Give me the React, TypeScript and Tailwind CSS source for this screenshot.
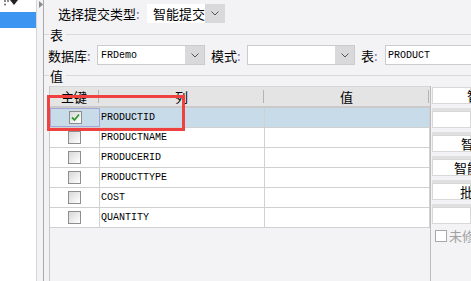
import React from "react";

const rows = ["PRODUCTID", "PRODUCTNAME", "PRODUCERID", "PRODUCTTYPE", "COST", "QUANTITY"];

const sideButtons = [
  { label: "智能添加字段", pad: "pl-[34px]" },
  { label: "", pad: "pl-[28px]" },
  { label: "智能添加单元格", pad: "pl-[28px]" },
  { label: "智能添加组合", pad: "pl-[21px]" },
  { label: "批量修改", pad: "pl-[27px]" },
  { label: "", pad: "pl-[27px]" },
];

function Chevron() {
  return (
    <svg width="8" height="5" viewBox="0 0 8 5">
      <path d="M0.5 0.5 L4 4 L7.5 0.5" fill="none" stroke="#555" strokeWidth="1" />
    </svg>
  );
}

function Colon() {
  return <span className="text-[#7d6f9a]">:</span>;
}

function Combo({ text, w }: { text?: string; w: string }) {
  return (
    <div className={`${w} shrink-0 h-[20px] flex border border-[#cbcbcb] bg-white`}>
      <div className="flex-1 flex items-center pl-[3px] font-['Liberation_Mono',monospace] text-[10px] text-black">
        {text}
      </div>
      <div className="w-[19px] bg-[#d9d9dc] flex items-center justify-center">
        <Chevron />
      </div>
    </div>
  );
}

function Separator({ label }: { label: string }) {
  return (
    <div className="h-[21px] flex items-center shrink-0">
      <div className="w-[5px] h-px bg-[#d9d9d9]" />
      <span className="px-[1px] text-[13px] leading-none text-black">{label}</span>
      <div className="flex-1 h-px bg-[#d9d9d9] ml-[2px]" />
    </div>
  );
}

function CheckBox({ checked }: { checked?: boolean }) {
  return (
    <div className="w-[13px] h-[13px] shrink-0 border border-[#8e8e8e] bg-linear-to-br from-[#d8d8d8] to-white flex items-center justify-center">
      {checked && (
        <svg width="11" height="11" viewBox="0 0 11 11">
          <path d="M2 5.5 L4.5 8 L9 2.5" fill="none" stroke="#2f9a2f" strokeWidth="1.8" />
        </svg>
      )}
    </div>
  );
}

export default function App() {
  return (
    <div className="relative w-[471px] h-[281px] overflow-hidden flex bg-[#f3f3f5] font-['Noto_Sans_CJK_SC',sans-serif] text-black">
      {/* tree panel */}
      <div className="w-[37px] shrink-0 bg-white border-r border-[#d5d5d5] flex flex-col">
        <svg width="17" height="7" viewBox="0 0 17 7" className="ml-[2px]">
          <circle cx="3" cy="1" r="0.9" fill="#555" />
          <circle cx="6" cy="1" r="0.9" fill="#555" />
          <circle cx="3" cy="4.5" r="0.9" fill="#555" />
          <path d="M8 0 L16 0 L12 5 Z" fill="#222" />
        </svg>
        <div className="mt-[5px] h-[16px] bg-[#3d95f2]" />
      </div>

      {/* splitter */}
      <div className="w-[6px] shrink-0 pt-[1px] pl-[2px]">
        <svg width="4" height="7" viewBox="0 0 4 7">
          <path d="M0 0 L4 3.5 L0 7 Z" fill="#8a8a8a" />
        </svg>
      </div>

      {/* main */}
      <div className="flex-1 min-w-0 border-l border-[#a9a9a9] flex flex-col">
        <div className="h-[24px] pt-[4px] pl-[14px] flex items-start shrink-0">
          <div className="w-[89px] shrink-0 h-[19px] flex items-center text-[13px] leading-none">
            选择提交类型<Colon />
          </div>
          <div className="w-[78px] shrink-0 h-[19px] flex">
            <div className="flex-1 bg-white flex items-center pl-[6px] text-[13px] leading-none">智能提交</div>
            <div className="w-[20px] bg-[#d9d9dc] flex items-center justify-center">
              <Chevron />
            </div>
          </div>
        </div>

        <Separator label="表" />

        <div className="h-[20px] pl-[4px] flex items-center shrink-0">
          <div className="w-[49px] shrink-0 text-[13px] leading-none">
            数据库<Colon />
          </div>
          <Combo text="FRDemo" w="w-[108px]" />
          <div className="ml-[6px] w-[36px] shrink-0 text-[13px] leading-none">
            模式<Colon />
          </div>
          <Combo w="w-[108px]" />
          <div className="ml-[6px] w-[24px] shrink-0 text-[13px] leading-none">
            表<Colon />
          </div>
          <div className="w-[110px] shrink-0 h-[20px] border border-[#cbcbcb] bg-white flex items-center pl-[2px] font-['Liberation_Mono',monospace] text-[10px]">
            PRODUCT
          </div>
        </div>

        <Separator label="值" />

        <div className="flex-1 flex min-h-0">
          {/* table */}
          <div className="ml-[5px] w-[381px] shrink-0 border-l border-[#c8c8c8] flex flex-col">
            <div className="h-[22px] flex bg-[#e4e4e4] border-t border-[#d6d6d6] border-b-2 border-b-[#cacaca] text-[13px] leading-none">
              {[
                ["主键", "w-[50px]"],
                ["列", "w-[165px]"],
                ["值", "w-[165px]"],
              ].map(([t, w]) => (
                <div key={t} className={`${w} flex items-center`}>
                  <span className="flex-1 text-center">{t}</span>
                  <div className="w-px h-[13px] bg-[#b4b4b4] mr-[1px]" />
                </div>
              ))}
            </div>
            {rows.map((name, i) => {
              const sel = i === 0;
              return (
                <div
                  key={name}
                  className={`h-[20px] flex border-b border-[#d0d0d0] ${sel ? "bg-[#c8dbe8]" : "bg-white"}`}
                >
                  <div
                    className={`w-[50px] flex items-center justify-center border-r ${sel ? "border border-[#a5a5d6]" : "border-[#d0d0d0]"}`}
                  >
                    <CheckBox checked={sel} />
                  </div>
                  <div className="w-[165px] border-r border-[#d0d0d0] flex items-center pl-[1px] font-['Liberation_Mono',monospace] text-[10px]">
                    {name}
                  </div>
                  <div className="w-[165px] border-r border-[#d0d0d0]" />
                </div>
              );
            })}
          </div>

          {/* side buttons */}
          <div className="flex-1 min-w-0 border-l border-[#bdbdbd] pl-[1px] pt-[1px] flex flex-col">
            {sideButtons.map((b, i) => (
              <div key={i} className="flex flex-col">
                {i > 0 && <div className="mt-[4px] h-[3px] bg-[#e0e0e0]" />}
                <div
                  className={`h-[17px] bg-white border border-[#d8d8d8] flex items-center whitespace-nowrap text-[13px] leading-none ${b.pad}`}
                >
                  {b.label}
                </div>
              </div>
            ))}
            <div className="mt-[5px] pl-[3px] flex items-center gap-[2px] whitespace-nowrap">
              <div className="w-[12px] h-[12px] shrink-0 border border-[#a8a8a8] bg-white" />
              <span className="text-[13px] leading-none text-[#a0a0a0]">未修改不更新</span>
            </div>
          </div>
        </div>
      </div>

      {/* annotation */}
      <div className="absolute left-[47px] top-[95px] w-[138px] h-[36px] border-[3px] border-[#f04141]" />
    </div>
  );
}
